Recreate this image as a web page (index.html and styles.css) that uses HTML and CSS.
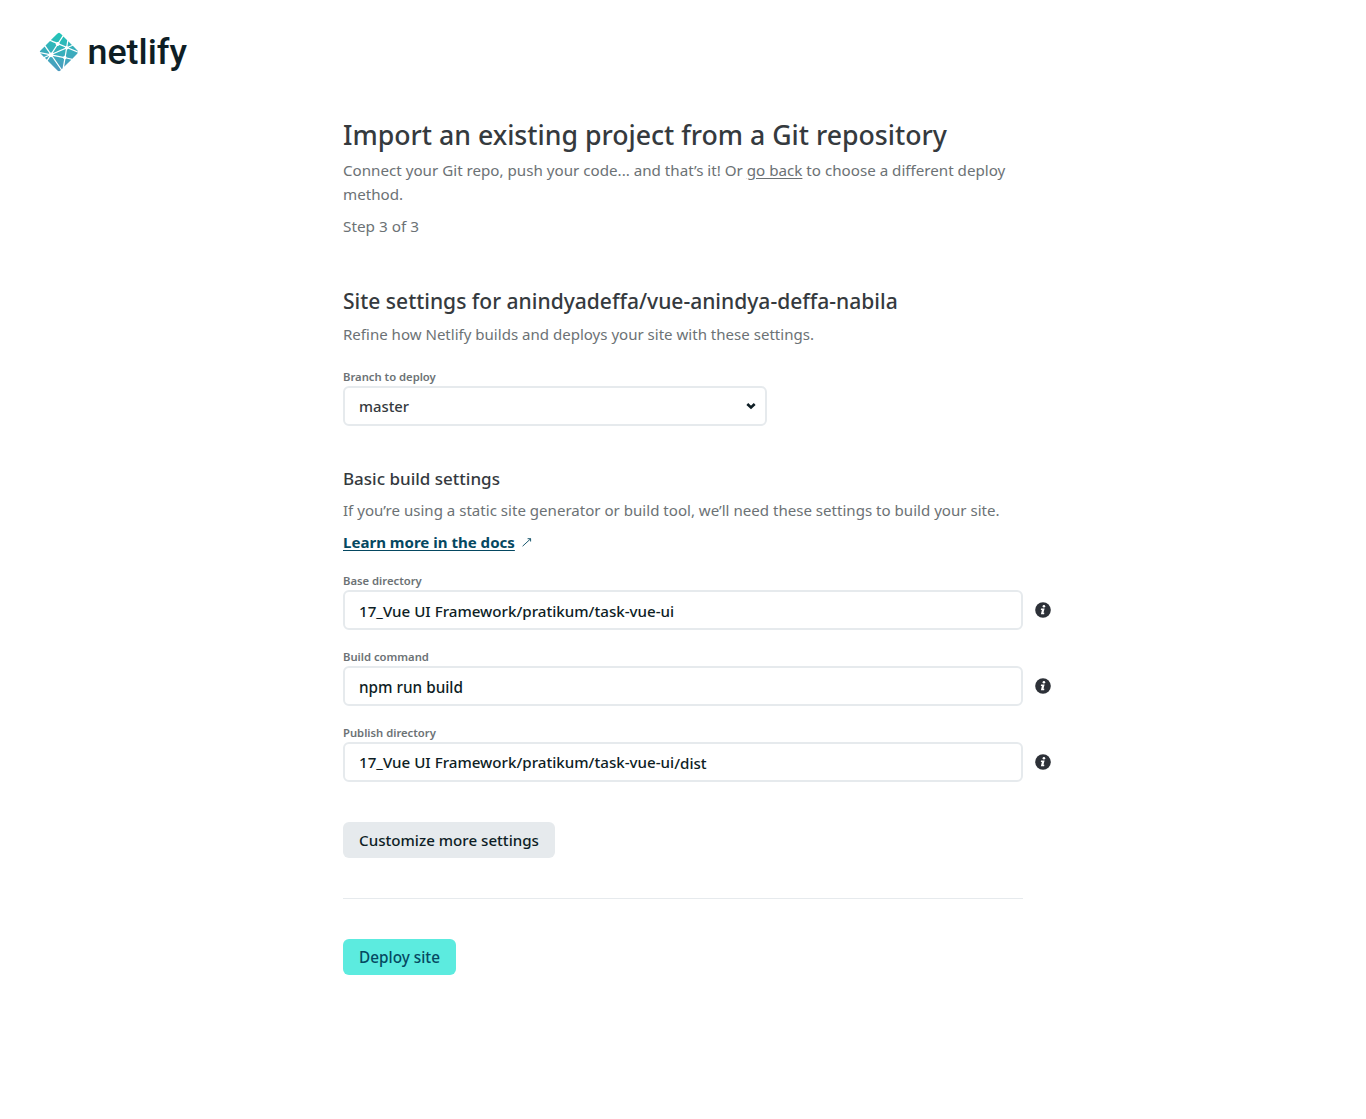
FILE: index.html
```html
<!DOCTYPE html>
<html lang="en">
<head>
<meta charset="utf-8">
<title>Import an existing project | Netlify</title>
<link rel="stylesheet" href="styles.css">
</head>
<body>
<svg class="defs" width="0" height="0" aria-hidden="true">
  <symbol id="info" viewBox="0 0 16 16">
    <circle cx="8" cy="8" r="7.8" fill="#2d3138"/>
    <circle cx="8.9" cy="4.3" r="1.3" fill="#fff"/>
    <path d="M6.1 6.4h3.5l-1.1 4.4h.9l-.3 1.5H5.9l1-4.4H5.8z" fill="#fff"/>
  </symbol>
</svg>
<header class="header">
  <a class="brand">
    <svg class="mark" width="40" height="40" viewBox="0 0 40 40" aria-hidden="true">
      <defs>
        <radialGradient id="tint" cx="0" cy="0" r="1" gradientUnits="userSpaceOnUse" gradientTransform="matrix(0 38.35 -45.5 0 20 .7)">
          <stop offset="0" stop-color="#20c6b7"/>
          <stop offset="1" stop-color="#4d9abf"/>
        </radialGradient>
      </defs>
      <path fill="url(#tint)" d="M28.589 14.135l-.014-.006c-.008-.003-.016-.006-.023-.013a.11.11 0 0 1-.028-.093l.773-4.726 3.625 3.626-3.77 1.604a.083.083 0 0 1-.033.006h-.015c-.005-.003-.01-.007-.02-.017a1.716 1.716 0 0 0-.495-.381zm5.258-.288l3.876 3.876c.805.806 1.208 1.208 1.355 1.674.022.069.04.138.054.209l-9.263-3.923a.728.728 0 0 0-.015-.006c-.037-.015-.08-.032-.08-.07 0-.038.044-.056.081-.071l.012-.005 3.98-1.684zm5.127 7.003c-.2.376-.59.766-1.25 1.427l-4.37 4.369-5.652-1.177-.03-.006c-.05-.008-.103-.017-.103-.062a1.706 1.706 0 0 0-.655-1.193c-.023-.023-.017-.059-.01-.092 0-.005 0-.01.002-.014l1.063-6.526.004-.022c.006-.05.015-.108.06-.108a1.73 1.73 0 0 0 1.16-.665c.009-.01.015-.021.027-.027.032-.015.07 0 .103.014l9.65 4.082zm-6.625 6.801l-7.186 7.186 1.23-7.56.002-.01c.001-.01.003-.02.006-.029.01-.024.036-.034.061-.044l.012-.005a1.85 1.85 0 0 0 .695-.517c.024-.028.053-.055.09-.06a.09.09 0 0 1 .029 0l5.06 1.04zm-8.707 8.707l-.81.81-8.955-12.942a.424.424 0 0 0-.01-.014c-.014-.019-.029-.038-.026-.06 0-.016.011-.03.022-.042l.01-.013c.027-.04.05-.08.075-.123l.02-.035.003-.003c.014-.024.027-.047.051-.06.021-.01.05-.006.073-.001l9.921 2.046a.164.164 0 0 1 .076.033c.013.013.016.027.019.043a1.757 1.757 0 0 0 1.028 1.175c.028.014.016.045.003.078a.238.238 0 0 0-.015.045c-.125.76-1.197 7.298-1.485 9.063zm-1.692 1.691c-.597.591-.949.904-1.347 1.03a2 2 0 0 1-1.206 0c-.466-.148-.869-.55-1.674-1.356L8.73 28.73l2.349-3.643c.011-.018.022-.034.04-.047.025-.018.061-.01.091 0a2.434 2.434 0 0 0 1.638-.083c.027-.01.054-.017.075.002a.19.19 0 0 1 .028.032L21.95 38.05zM7.863 27.863L5.8 25.8l4.074-1.738a.084.084 0 0 1 .033-.007c.034 0 .054.034.072.065a2.91 2.91 0 0 0 .13.184l.013.016c.012.017.004.034-.008.05l-2.25 3.493zm-2.976-2.976l-2.61-2.61c-.444-.444-.766-.766-.99-1.043l7.936 1.646a.84.84 0 0 0 .03.005c.049.008.103.017.103.063 0 .05-.059.073-.109.092l-.023.01-4.337 1.837zM.831 19.892a2 2 0 0 1 .09-.495c.148-.466.55-.868 1.356-1.674l3.34-3.34a2175.525 2175.525 0 0 0 4.626 6.687c.027.036.057.076.026.106-.146.161-.292.337-.395.528a.16.16 0 0 1-.05.062c-.013.008-.027.005-.042.002H9.78L.831 19.891zm5.68-6.403l4.491-4.491c.422.185 1.958.834 3.332 1.414 1.04.44 1.988.84 2.286.97.03.012.057.024.07.054.008.018.004.041 0 .06a2.003 2.003 0 0 0 .523 1.828c.03.03 0 .073-.026.11l-.014.021-4.56 7.063c-.012.02-.023.037-.043.05-.024.015-.058.008-.086.001a2.274 2.274 0 0 0-.543-.074c-.164 0-.342.03-.522.063h-.001c-.02.003-.038.007-.054-.005a.21.21 0 0 1-.045-.051l-4.808-7.013zm5.398-5.398l5.814-5.814c.805-.805 1.208-1.208 1.674-1.355a2 2 0 0 1 1.206 0c.466.147.869.55 1.674 1.355l1.26 1.26-4.135 6.404a.155.155 0 0 1-.041.048c-.025.017-.06.01-.09 0a2.097 2.097 0 0 0-1.92.37c-.027.028-.067.012-.101-.003-.54-.235-4.74-2.01-5.341-2.265zm12.506-3.676l3.818 3.818-.92 5.698v.015a.135.135 0 0 1-.008.038c-.01.02-.03.024-.05.03a1.83 1.83 0 0 0-.548.273.154.154 0 0 0-.02.017c-.011.012-.022.023-.04.025a.114.114 0 0 1-.043-.007l-5.818-2.472-.011-.005c-.037-.015-.081-.033-.081-.071a2.198 2.198 0 0 0-.31-.915c-.028-.046-.059-.094-.035-.141l4.066-6.303zm-3.932 8.606l5.454 2.31c.03.014.063.027.076.058a.106.106 0 0 1 0 .057c-.016.08-.03.171-.03.263v.153c0 .038-.039.054-.075.069l-.011.004c-.864.369-12.13 5.173-12.147 5.173-.017 0-.035 0-.052-.017-.03-.03 0-.072.027-.11a.76.76 0 0 0 .014-.02l4.482-6.94.008-.012c.026-.042.056-.089.104-.089l.045.007c.102.014.192.027.283.027.68 0 1.31-.331 1.69-.897a.16.16 0 0 1 .034-.04c.027-.02.067-.01.098.004zm-6.246 9.185l12.28-5.237s.018 0 .035.017c.067.067.124.112.179.154l.027.017c.025.014.05.03.052.056 0 .01 0 .016-.002.025L25.756 23.7l-.004.026c-.007.05-.014.107-.061.107a1.729 1.729 0 0 0-1.373.847l-.005.008c-.014.023-.027.045-.05.057-.021.01-.048.006-.07.001l-9.793-2.02c-.01-.002-.152-.519-.163-.52z"/>
    </svg>
    <span class="wordmark">netlify</span>
  </a>
</header>

<main class="main">
  <h1 class="title">Import an existing project from a Git repository</h1>
  <p class="text intro">Connect your Git repo, push your code... and that’s it! Or <a class="back">go back</a> to choose a different deploy method.</p>
  <p class="text step">Step 3 of 3</p>

  <h2 class="subtitle">Site settings for anindyadeffa/vue-anindya-deffa-nabila</h2>
  <p class="text refine">Refine how Netlify builds and deploys your site with these settings.</p>

  <div class="field branch">
    <span class="label">Branch to deploy</span>
    <div class="control select">
      <span>master</span>
      <svg width="10" height="7" viewBox="0 0 10 7" aria-hidden="true"><path d="M1.3 1 5 4.5 8.7 1" fill="none" stroke="#0e1e25" stroke-width="2.6"/></svg>
    </div>
  </div>

  <h3 class="section">Basic build settings</h3>
  <p class="text hint">If you’re using a static site generator or build tool, we’ll need these settings to build your site.</p>
  <p class="docs"><a class="docs-link">Learn more in the docs</a><svg width="10" height="10" viewBox="0 0 10 10" aria-hidden="true"><path d="M.6 9.2 8.6 1.8M5.6 1.7h3v2.8" fill="none" stroke="#054861" stroke-width=".9"/></svg></p>

  <div class="field">
    <span class="label">Base directory</span>
    <div class="row">
      <div class="control low"><span>17_Vue UI Framework/pratikum/task-vue-ui</span></div>
      <svg class="info" width="16" height="16"><use href="#info"/></svg>
    </div>
  </div>
  <div class="field">
    <span class="label">Build command</span>
    <div class="row">
      <div class="control low command"><span>npm run build</span></div>
      <svg class="info" width="16" height="16"><use href="#info"/></svg>
    </div>
  </div>
  <div class="field">
    <span class="label">Publish directory</span>
    <div class="row">
      <div class="control"><span>17_Vue UI Framework/pratikum/task-vue-ui<span class="tail">/dist</span></span></div>
      <svg class="info" width="16" height="16"><use href="#info"/></svg>
    </div>
  </div>

  <button class="button customize">Customize more settings</button>
  <hr class="rule">
  <button class="button deploy">Deploy site</button>
</main>
</body>
</html>
```
FILE: styles.css
```css
* { box-sizing: border-box; }

body {
  margin: 0;
  min-height: 1119px;
  background: #fff;
  color: #0e1e25;
  font-family: "Noto Sans", "Open Sans", sans-serif;
  font-size: 15.15px;
  line-height: 24px;
}

h1, h2, h3, p { margin: 0; white-space: nowrap; }

.defs { display: block; height: 0; }

.header { height: 115px; padding: 32px 39px 0; }
.brand { display: flex; height: 40px; gap: 8.5px; }
.mark { display: block; flex: none; }
.wordmark {
  color: #0e1e25;
  font: 500 35.8px/40px Roboto, sans-serif;
}

.main { width: 680px; margin: 0 auto; }

.title {
  color: #353a3e;
  font-size: 26.68px;
  font-weight: 500;
  line-height: 40px;
}
.text { color: #6c7275; font-size: 15.08px; }
.intro { margin-top: 3px; font-size: 15.17px; white-space: normal; }
.back { text-decoration: underline; text-underline-offset: 2px; }
.step { margin-top: 8px; font-size: 15.32px; }

.subtitle {
  margin-top: 47px;
  color: #353a3e;
  font-size: 21.04px;
  font-weight: 500;
  line-height: 32px;
}
.refine { margin-top: 5px; font-size: 15.05px; }

.field { margin-bottom: 18px; }
.branch { margin: 22px 0 41px; }
.label {
  display: block;
  height: 18px;
  color: #6c7275;
  font-size: 11.25px;
  font-weight: 600;
  line-height: 17px;
}
.row { display: flex; align-items: center; gap: 12px; }
.control {
  display: flex;
  flex: 0 0 680px;
  align-items: center;
  width: 680px;
  height: 40px;
  padding: 0 14px;
  border: 2px solid #e6eaed;
  border-radius: 6px;
  color: #0e1e25;
  font-weight: 500;
}
.low { padding-top: 2px; }
.command { font-size: 15.3px; }
.tail { vertical-align: -1px; }
.select { justify-content: space-between; width: 424px; padding-right: 9px; color: #353a3e; font-size: 14.8px; }
.info { flex: none; }

.section {
  color: #353a3e;
  font-size: 17.01px;
  font-weight: 500;
  line-height: 24px;
}
.hint { margin-top: 7px; }
.docs { display: flex; align-items: center; gap: 7px; margin: 8px 0 18px; }
.docs-link {
  color: #054861;
  font-size: 15.06px;
  font-weight: 700;
  text-decoration: underline;
  text-underline-offset: 2px;
}

.button {
  display: block;
  height: 36px;
  padding: 0;
  border: 0;
  border-radius: 6px;
  font-family: inherit;
  font-weight: 500;
  line-height: 36px;
}
.customize { width: 212px; margin-top: 40px; background: #e6eaed; color: #0e1e25; font-size: 15.13px; }
.rule { height: 1px; margin: 40px 0; border: 0; background: #e6eaed; }
.deploy { width: 113px; background: #5cebdf; color: #054861; font-size: 15.32px; }
```
